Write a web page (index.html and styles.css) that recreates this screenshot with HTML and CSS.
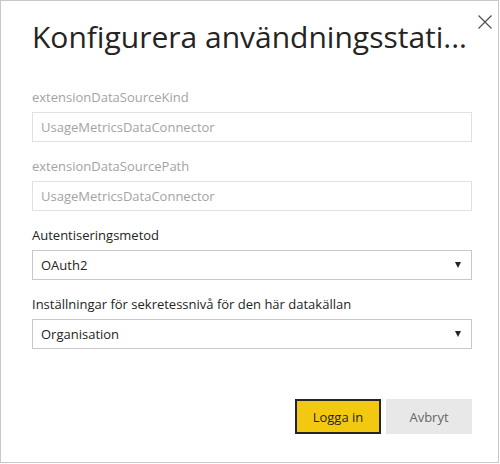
FILE: index.html
```html
<!DOCTYPE html>
<html lang="sv">
<head>
<meta charset="utf-8">
<link rel="stylesheet" href="styles.css">
</head>
<body>
<div class="dialog">
  <button class="close" aria-label="Stäng">
    <svg width="14" height="14" viewBox="0 0 14 14"><path d="M0.5 0.5 L13.5 13.5 M13.5 0.5 L0.5 13.5" stroke="#4a4a4a" stroke-width="1.1" fill="none"/></svg>
  </button>
  <h1 class="title">Konfigurera användningsstati...</h1>
  <div class="field first">
    <div class="label disabled">extensionDataSourceKind</div>
    <div class="input disabled">UsageMetricsDataConnector</div>
  </div>
  <div class="field">
    <div class="label disabled">extensionDataSourcePath</div>
    <div class="input disabled">UsageMetricsDataConnector</div>
  </div>
  <div class="field">
    <div class="label">Autentiseringsmetod</div>
    <div class="input select">OAuth2<span class="arrow"></span></div>
  </div>
  <div class="field">
    <div class="label">Inställningar för sekretessnivå för den här datakällan</div>
    <div class="input select">Organisation<span class="arrow"></span></div>
  </div>
  <div class="actions">
    <button class="btn primary">Logga in</button>
    <button class="btn secondary">Avbryt</button>
  </div>
</div>
</body>
</html>
```
FILE: styles.css
```css
html, body { margin: 0; padding: 0; background: #fff; }
body { font-family: "Open Sans", "Noto Sans", sans-serif; color: #252423; }
.dialog {
  position: relative;
  width: 499px;
  height: 463px;
  box-sizing: border-box;
  border: 1px solid #c8c8c8;
  padding: 0 26px 0 31px;
  display: flex;
  flex-direction: column;
}
.close {
  position: absolute;
  top: 13px;
  right: 5px;
  width: 16px;
  height: 16px;
  padding: 1px;
  border: 0;
  background: none;
  display: flex;
}
.title {
  margin: 15px 0 0;
  font-size: 30px;
  font-weight: 400;
  line-height: 42px;
  white-space: nowrap;
  color: #252423;
}
.field { display: flex; flex-direction: column; margin-top: 14px; }
.field.first { margin-top: 29px; }
.label { font-size: 13px; line-height: 20px; margin-bottom: 5px; }
.label.disabled { color: #a3a3a3; }
.input {
  height: 30px;
  box-sizing: border-box;
  border: 1px solid #c8c8c8;
  padding: 0 8px;
  font-size: 13px;
  line-height: 28px;
  display: flex;
  align-items: center;
  justify-content: space-between;
}
.input.disabled { border-color: #e1e1e1; color: #a3a3a3; }
.arrow {
  width: 0; height: 0;
  border-left: 3px solid transparent;
  border-right: 3px solid transparent;
  border-top: 6px solid #252423;
  margin-right: 2px;
}
.actions {
  margin-top: auto;
  margin-bottom: 28px;
  display: flex;
  justify-content: flex-end;
  gap: 5px;
}
.btn {
  height: 35px;
  width: 86px;
  font-family: inherit;
  font-size: 13px;
  box-sizing: border-box;
  padding: 0;
}
.primary { background: #f2c811; border: 2px solid #252423; color: #252423; }
.secondary { background: #e8e8e8; border: 1px solid #e8e8e8; color: #666; }
```
